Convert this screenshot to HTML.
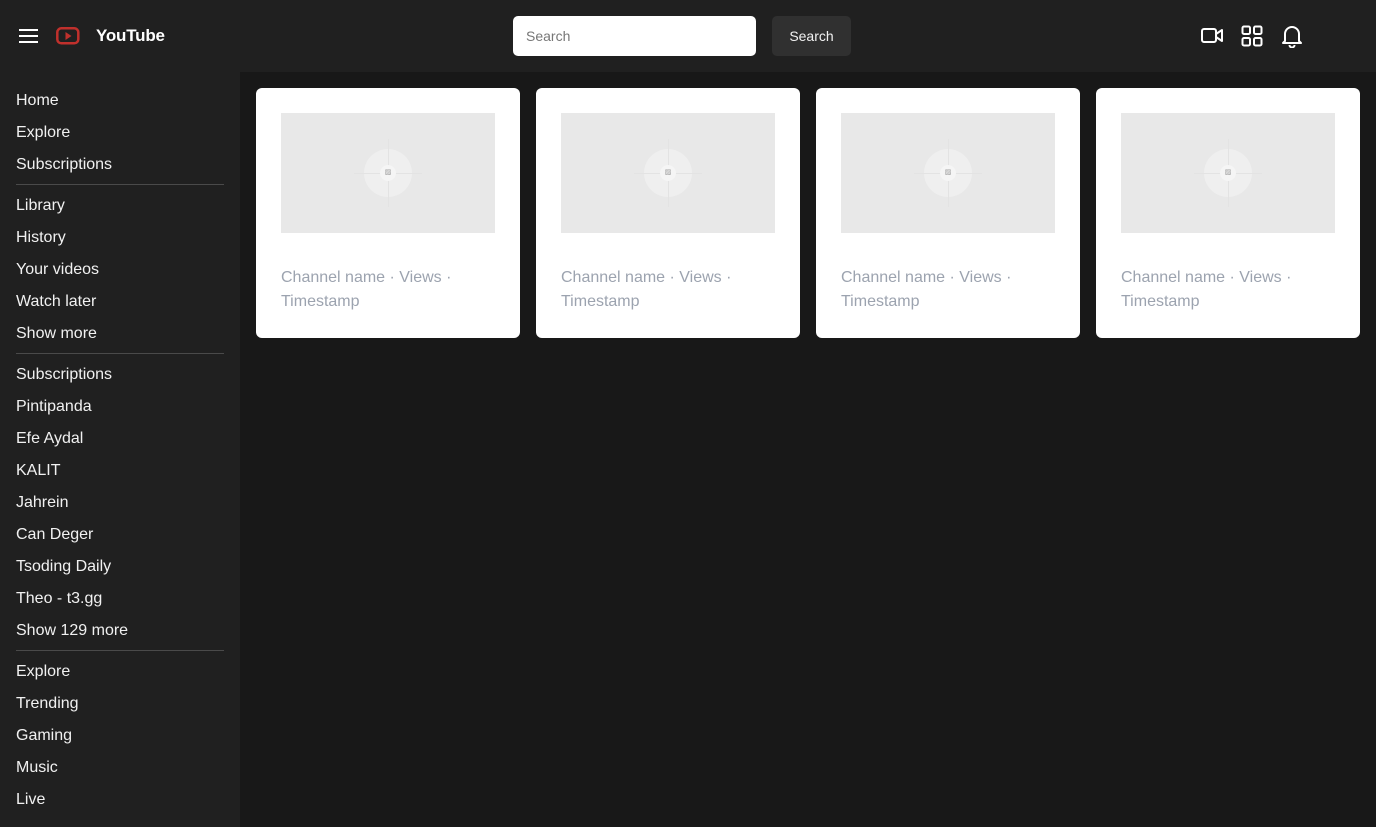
<!DOCTYPE html>
<html><head><meta charset="utf-8">
<style>
*{box-sizing:border-box;margin:0;padding:0}
body{width:1376px;height:827px;overflow:hidden;background:#181818;font-family:"Liberation Sans",sans-serif;color:#fff;position:relative}
header{position:absolute;left:0;top:0;width:1376px;height:72px;background:#202020}
aside{position:absolute;left:0;top:72px;width:240px;height:755px;background:#202020}
.it{position:absolute;left:16px;font-size:16px;line-height:20px;color:#f1f1f1}
.hr{position:absolute;left:16px;width:208px;height:1px;background:#4a4a4a}
.card{position:absolute;top:88px;width:264px;height:250px;background:#fff;border-radius:6px}
.th{position:absolute;left:25px;top:25px;width:214px;height:120px;background:#e8e8e8;overflow:hidden}
.th .c{position:absolute;left:83px;top:36px;width:48px;height:48px;border-radius:50%;background:#efefef}
.th .d{position:absolute;left:99px;top:52px;width:16px;height:16px;border-radius:50%;background:#f5f5f5;font-size:7px;color:#999;text-align:center;line-height:16px}
.th .h{position:absolute;left:73px;top:60px;width:68px;height:1px;background:#e3e3e3}
.th .v{position:absolute;left:107px;top:26px;width:1px;height:68px;background:#e3e3e3}
.tx{position:absolute;left:25px;top:178px;width:200px;font-size:16px;line-height:24px;color:#9ca3af}
</style></head><body>
<header>
<svg style="position:absolute;left:19px;top:28px" width="19" height="16"><g stroke="#fff" stroke-width="2"><line x1="0" y1="2" x2="19" y2="2"/><line x1="0" y1="8" x2="19" y2="8"/><line x1="0" y1="14" x2="19" y2="14"/></g></svg>
<svg style="position:absolute;left:56px;top:27px" width="24" height="18"><rect x="1.3" y="1.3" width="21" height="15" rx="4" fill="none" stroke="#c0302c" stroke-width="2.5"/><path d="M9.5 5L15.5 9L9.5 13Z" fill="#c0302c"/></svg>
<div style="position:absolute;left:96px;top:26px;font-size:17px;font-weight:bold;line-height:20px;letter-spacing:-0.2px">YouTube</div>
<div style="position:absolute;left:513px;top:16px;width:243px;height:40px;background:#fff;border-radius:5px;color:#777;font-size:14px;line-height:40px;padding-left:13px">Search</div>
<div style="position:absolute;left:772px;top:16px;width:79px;height:40px;background:#303030;border-radius:5px;font-size:14px;line-height:40px;text-align:center;color:#f1f1f1">Search</div>
<svg style="position:absolute;left:1200px;top:26px" width="24" height="20" fill="none" stroke="#fff" stroke-width="2" stroke-linejoin="round"><rect x="2" y="3" width="14" height="13" rx="2"/><path d="M16 8l6-4v11l-6-4"/></svg>
<svg style="position:absolute;left:1241px;top:25px" width="22" height="22" fill="none" stroke="#fff" stroke-width="2"><rect x="1.5" y="1.5" width="7.5" height="7.5" rx="1.5"/><rect x="13" y="1.5" width="7.5" height="7.5" rx="1.5"/><rect x="1.5" y="13" width="7.5" height="7.5" rx="1.5"/><rect x="13" y="13" width="7.5" height="7.5" rx="1.5"/></svg>
<svg style="position:absolute;left:1281px;top:24px" width="22" height="24" fill="none" stroke="#fff" stroke-width="2" stroke-linejoin="round"><path d="M4 17V10a7 7 0 0 1 14 0v7l2 2H2z"/><path d="M8.5 21a2.5 2.5 0 0 0 5 0"/></svg>
</header>
<aside>
<div class="it" style="top:19px">Home</div>
<div class="it" style="top:51px">Explore</div>
<div class="it" style="top:83px">Subscriptions</div>
<div class="hr" style="top:112px"></div>
<div class="it" style="top:124px">Library</div>
<div class="it" style="top:156px">History</div>
<div class="it" style="top:188px">Your videos</div>
<div class="it" style="top:220px">Watch later</div>
<div class="it" style="top:252px">Show more</div>
<div class="hr" style="top:281px"></div>
<div class="it" style="top:293px">Subscriptions</div>
<div class="it" style="top:325px">Pintipanda</div>
<div class="it" style="top:357px">Efe Aydal</div>
<div class="it" style="top:389px">KALIT</div>
<div class="it" style="top:421px">Jahrein</div>
<div class="it" style="top:453px">Can Deger</div>
<div class="it" style="top:485px">Tsoding Daily</div>
<div class="it" style="top:517px">Theo - t3.gg</div>
<div class="it" style="top:549px">Show 129 more</div>
<div class="hr" style="top:578px"></div>
<div class="it" style="top:590px">Explore</div>
<div class="it" style="top:622px">Trending</div>
<div class="it" style="top:654px">Gaming</div>
<div class="it" style="top:686px">Music</div>
<div class="it" style="top:718px">Live</div>
</aside>
<div class="card" style="left:256px"><div class="th"><div class="c"></div><div class="h"></div><div class="v"></div><div class="d">▨</div></div><div class="tx">Channel name · Views · Timestamp</div></div>
<div class="card" style="left:536px"><div class="th"><div class="c"></div><div class="h"></div><div class="v"></div><div class="d">▨</div></div><div class="tx">Channel name · Views · Timestamp</div></div>
<div class="card" style="left:816px"><div class="th"><div class="c"></div><div class="h"></div><div class="v"></div><div class="d">▨</div></div><div class="tx">Channel name · Views · Timestamp</div></div>
<div class="card" style="left:1096px"><div class="th"><div class="c"></div><div class="h"></div><div class="v"></div><div class="d">▨</div></div><div class="tx">Channel name · Views · Timestamp</div></div>
</body></html>
